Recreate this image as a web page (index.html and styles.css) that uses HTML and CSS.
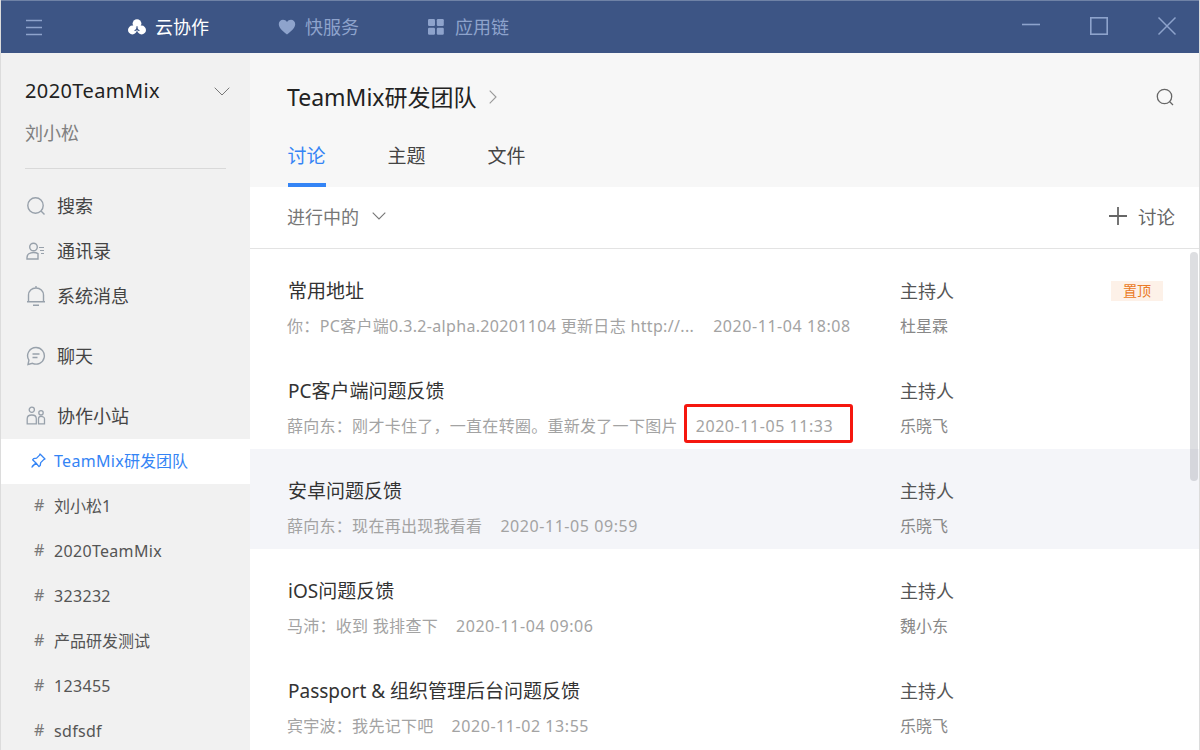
FILE: index.html
```html
<!DOCTYPE html>
<html lang="zh-CN">
<head>
<meta charset="utf-8">
<title>云协作</title>
<link rel="stylesheet" href="styles.css">
</head>
<body>
<div class="app">
  <header class="titlebar">
    <button class="tb-menu" aria-label="菜单"><svg width="18" height="17" viewBox="0 0 18 17"><path d="M1 1.500h16M1 8.500h16M1 15.500h16" stroke="#8ea3cc" stroke-width="1.400" fill="none"/></svg></button>
    <nav class="tb-nav">
      <a class="tb-link active"><svg width="18" height="16" viewBox="0 0 18 16"><circle cx="9" cy="4.600" r="4.400" fill="#fff"/><circle cx="4.400" cy="11" r="4.400" fill="#fff"/><circle cx="13.600" cy="11" r="4.400" fill="#fff"/><path d="M9 7.200v3M9 10.200l-2.400 1.600M9 10.200l2.400 1.600" stroke="#3d5585" stroke-width="1.200" fill="none"/></svg>云协作</a>
      <a class="tb-link"><svg width="18" height="16" viewBox="0 0 18 16"><path d="M9 15.500C3.500 11.500.8 8.600.8 5.100.8 2.500 2.800.7 5 .7c1.700 0 3.100.8 4 2.200C9.900 1.500 11.300.7 13 .7c2.200 0 4.200 1.800 4.200 4.400 0 3.500-2.700 6.400-8.200 10.400z" fill="#8ea3cc"/></svg>快服务</a>
      <a class="tb-link"><svg width="18" height="16" viewBox="0 0 18 16"><rect width="7" height="7" rx="1.200" fill="#8ea3cc"/><rect x="8.800" width="7" height="7" rx="1.200" fill="#8ea3cc"/><rect y="8.800" width="7" height="7" rx="1.200" fill="#8ea3cc"/><rect x="8.800" y="8.800" width="7" height="7" rx="1.200" fill="#8ea3cc"/></svg>应用链</a>
    </nav>
    <div class="tb-win">
      <svg width="20" height="20" viewBox="0 0 20 20"><path d="M1 8.500h18" stroke="#8ea3cc" stroke-width="1.600"/></svg>
      <svg width="20" height="20" viewBox="0 0 20 20"><rect x="1.800" y="1.800" width="16.400" height="16.400" fill="none" stroke="#8ea3cc" stroke-width="1.600"/></svg>
      <svg width="20" height="20" viewBox="0 0 20 20"><path d="M1.500 1.500l17 17M18.500 1.500l-17 17" stroke="#8ea3cc" stroke-width="1.500"/></svg>
    </div>
  </header>

  <div class="body">
    <aside class="sidebar">
      <div class="team">
        <div class="team-name"><span class="lat">2020TeamMix</span><svg width="16" height="9" viewBox="0 0 16 9"><path d="M.7.7L8 8l7.300-7.300" stroke="#777" stroke-width="1" fill="none"/></svg></div>
        <div class="user-name">刘小松</div>
      </div>
      <ul class="menu">
        <li class="menu-item"><svg width="20" height="20" viewBox="0 0 20 20"><circle cx="9.500" cy="9.500" r="7.700" fill="none" stroke="#98a1ab" stroke-width="1.400"/><path d="M15 15l3.500 3.500" stroke="#98a1ab" stroke-width="1.400"/></svg>搜索</li>
        <li class="menu-item m2"><svg width="20" height="20" viewBox="0 0 20 20"><circle cx="7.500" cy="6" r="3.800" fill="none" stroke="#98a1ab" stroke-width="1.400"/><path d="M1 18v-1.500c0-3 2.800-5 6.500-5 1.700 0 3.300.4 4.500 1.200V18z" fill="none" stroke="#98a1ab" stroke-width="1.400"/><path d="M13 6.500h5M14 9.500h4M15 12.500h3" stroke="#98a1ab" stroke-width="1.100"/></svg>通讯录</li>
        <li class="menu-item m3"><svg width="20" height="22" viewBox="0 0 20 22"><path d="M2.500 16.500V10c0-4 3.200-7 7.500-7s7.500 3 7.500 7v6.500M1 16.700h18M10 1v2M7 20.300h6" fill="none" stroke="#98a1ab" stroke-width="1.400"/></svg>系统消息</li>
        <li class="menu-item m4"><svg width="20" height="20" viewBox="0 0 20 20"><path d="M10 1.500a8.300 8.300 0 1 1-3.500 15.800L2 18.500l.9-4.300A8.300 8.300 0 0 1 10 1.500z" fill="none" stroke="#98a1ab" stroke-width="1.400"/><path d="M6.500 8h7M6.500 11.500h5" stroke="#98a1ab" stroke-width="1.300"/></svg>聊天</li>
        <li class="menu-item m5"><svg width="20" height="20" viewBox="0 0 20 20"><circle cx="5.800" cy="3.800" r="2.600" fill="none" stroke="#98a1ab" stroke-width="1.300"/><circle cx="15" cy="6.800" r="2.200" fill="none" stroke="#98a1ab" stroke-width="1.300"/><path d="M1.200 17.800v-5c0-2.300 2-3.800 4.600-3.800s4.500 1.500 4.500 3.800v5zM12.500 17.800v-5c0-1.500 1.100-2.500 2.500-2.500s3.500 1 3.500 2.500v5z" fill="none" stroke="#98a1ab" stroke-width="1.300"/></svg>协作小站</li>
      </ul>
      <ul class="channels">
        <li class="channel active"><svg class="pin" width="15" height="15" viewBox="0 0 15 15"><path d="M9 1l5 5-1.300.6-3 3-.5 3-1.200 1L5 10 1.500 13.500 1 14l.5-.9L5 10 1.600 6.800l1-1.200 3-.5 3-3z" fill="none" stroke="#3484f5" stroke-width="1.300" stroke-linejoin="round"/></svg><span><span class="lat">TeamMix</span>研发团队</span></li>
        <li class="channel"><span class="hash">#</span>刘小松1</li>
        <li class="channel"><span class="hash">#</span><span class="lat">2020TeamMix</span></li>
        <li class="channel"><span class="hash">#</span><span class="lat">323232</span></li>
        <li class="channel"><span class="hash">#</span>产品研发测试</li>
        <li class="channel"><span class="hash">#</span><span class="lat">123455</span></li>
        <li class="channel"><span class="hash">#</span><span class="lat">sdfsdf</span></li>
      </ul>
    </aside>

    <main class="main">
      <section class="head">
        <div class="head-top">
          <h1>TeamMix研发团队</h1>
          <svg class="head-arrow" width="8" height="14" viewBox="0 0 8 14"><path d="M.7.7L7 7 .7 13.300" stroke="#999" stroke-width="1.100" fill="none"/></svg>
          <svg class="head-search" width="18" height="18" viewBox="0 0 18 18"><circle cx="8.500" cy="8.500" r="7.200" fill="none" stroke="#666" stroke-width="1.300"/><path d="M13.500 13.500l3.500 3.500" stroke="#666" stroke-width="1.300"/></svg>
        </div>
        <div class="tabs">
          <span class="tab active">讨论</span>
          <span class="tab">主题</span>
          <span class="tab">文件</span>
        </div>
      </section>
      <div class="filter">
        <span class="filter-l">进行中的<svg width="14" height="8" viewBox="0 0 14 8"><path d="M.7.7L7 7l6.300-6.300" stroke="#777" stroke-width="1.100" fill="none"/></svg></span>
        <span class="filter-r"><svg width="18" height="18" viewBox="0 0 18 18"><path d="M0 9h18M9 0v18" stroke="#666" stroke-width="1.800"/></svg>讨论</span>
      </div>
      <div class="list">
        <article class="row">
          <div class="row-l"><div class="title">常用地址</div><div class="sub"><span class="msg wide">你：PC客户端0.3.2-alpha.20201104 更新日志 http://...</span><span class="time">2020-11-04 18:08</span></div></div>
          <div class="row-r"><div class="host">主持人</div><div class="person">杜星霖</div></div>
          <span class="tag">置顶</span>
        </article>
        <article class="row">
          <div class="row-l"><div class="title">PC客户端问题反馈</div><div class="sub"><span class="msg">薛向东：刚才卡住了，一直在转圈。重新发了一下图片</span><span class="time">2020-11-05 11:33</span></div></div>
          <div class="row-r"><div class="host">主持人</div><div class="person">乐晓飞</div></div>
        </article>
        <article class="row hover">
          <div class="row-l"><div class="title">安卓问题反馈</div><div class="sub"><span class="msg">薛向东：现在再出现我看看</span><span class="time">2020-11-05 09:59</span></div></div>
          <div class="row-r"><div class="host">主持人</div><div class="person">乐晓飞</div></div>
        </article>
        <article class="row">
          <div class="row-l"><div class="title">iOS问题反馈</div><div class="sub"><span class="msg">马沛：收到 我排查下</span><span class="time">2020-11-04 09:06</span></div></div>
          <div class="row-r"><div class="host">主持人</div><div class="person">魏小东</div></div>
        </article>
        <article class="row">
          <div class="row-l"><div class="title">Passport &amp; 组织管理后台问题反馈</div><div class="sub"><span class="msg">宾宇波：我先记下吧</span><span class="time">2020-11-02 13:55</span></div></div>
          <div class="row-r"><div class="host">主持人</div><div class="person">乐晓飞</div></div>
        </article>
        <div class="scrollbar"></div>
      </div>
    </main>
  </div>
  <div class="redbox"></div>
</div>
</body>
</html>
```
FILE: styles.css
```css
* { box-sizing: border-box; }
html, body { margin: 0; padding: 0; }
body {
  width: 1200px; height: 750px; overflow: hidden;
  font-family: "Noto Sans", "Noto Sans CJK SC", sans-serif;
  color: #333; background: #fff;
}
ul { list-style: none; margin: 0; padding: 0; }
.app { position: relative; width: 1200px; height: 750px; overflow: hidden; border-left: 1px solid #dcdcdc; border-right: 1px solid #dcdcdc; }
.lat { letter-spacing: .02em; }

.titlebar {
  height: 53px; background: #3d5585; border: 1px solid #6f82a6; border-bottom: 0;
  display: flex; align-items: center; margin: 0 -1px; padding-left: 24px;
}
.tb-menu { background: none; border: 0; padding: 0; width: 18px; height: 17px; display: block; line-height: 0; }
.tb-nav { display: flex; margin-left: 85px; gap: 69px; }
.tb-link { display: flex; align-items: center; gap: 9px; font-size: 18px; color: #8ea3cc; line-height: 24px; }
.tb-link.active { color: #fff; }
.tb-win { margin-left: auto; margin-bottom: 3px; display: flex; gap: 48px; padding-right: 22px; }
.tb-win svg { display: block; }

.body { display: flex; height: 697px; }
.sidebar { width: 249px; flex: none; background: #f1f1f1; }
.team { margin: 0 24px; padding-top: 24px; height: 116px; border-bottom: 1px solid #d9d9d9; }
.team-name { display: flex; align-items: center; justify-content: space-between; font-size: 20px; line-height: 28px; color: #222; margin-right: -4px; }
.user-name { margin-top: 16px; font-size: 18px; line-height: 24px; color: #808080; }
.menu { padding-left: 25px; padding-top: 25px; }
.menu-item { display: flex; align-items: center; gap: 11px; font-size: 18px; line-height: 24px; height: 24px; color: #444; }
.menu-item svg { flex: none; }
.m2 { margin-top: 21px; }
.m3 { margin-top: 21px; }
.m4 { margin-top: 36px; }
.m5 { margin-top: 36px; }
.channels { margin-top: 11px; }
.channel { display: flex; align-items: center; height: 45px; padding: 0 0 3px 33px; font-size: 16px; color: #555; }
.channel.active { background: #fff; color: #3484f5; padding-left: 30px; }
.channel > .lat { margin-top: 2px; }
.pin { margin-right: 8px; }
.hash { width: 20px; color: #777; }

.main { flex: 1; min-width: 0; display: flex; flex-direction: column; }
.head { height: 134px; background: #f7f7f7; padding-left: 37px; }
.head-top { display: flex; align-items: center; height: 30px; margin-top: 29px; padding-right: 25px; }
.head-top h1 { margin: 0; font-size: 23px; font-weight: 400; color: #222; line-height: 30px; }
.head-arrow { margin-left: 12px; }
.head-search { margin-left: auto; }
.tabs { display: flex; gap: 62px; margin-top: 21px; padding-left: .500px; }
.tab { font-size: 19px; line-height: 46px; height: 54px; color: #444; }
.tab.active { color: #3484f5; border-bottom: 4px solid #3484f5; }

.filter { height: 62px; border-bottom: 1px solid #e3e3e3; display: flex; align-items: center; justify-content: space-between; padding: 0 24px 4px 37px; font-size: 18px; color: #777; }
.filter-l { display: flex; align-items: center; gap: 13px; }
.filter-r { display: flex; align-items: center; gap: 11px; color: #666; font-size: 18.500px; }
.filter svg { display: block; }

.list { position: relative; flex: 1; overflow: hidden; }
.row { position: relative; height: 100px; display: flex; padding-left: 37px; }
.row.hover { background: #f4f5f9; }
.row-l { width: 613px; }
.title { margin-top: 27px; padding-left: 1px; font-size: 19px; line-height: 30px; color: #333; }
.sub { display: flex; margin-top: 8px; font-size: 16px; line-height: 24px; color: #a3a3a3; white-space: nowrap; }
.msg { margin-right: 18px; letter-spacing: .28px; }
.msg.wide { margin-right: 19px; letter-spacing: .33px; }
.time { letter-spacing: .56px; }
.row-r { width: 120px; }
.host { margin-top: 27px; font-size: 18px; line-height: 30px; color: #555; }
.person { margin-top: 8px; font-size: 16px; line-height: 24px; color: #888; }
.tag { position: absolute; left: 861px; top: 32px; width: 52px; height: 20px; background: #fdf1e8; color: #ea7a25; font-size: 14px; line-height: 20px; text-align: center; }
.scrollbar { position: absolute; right: 1px; top: 3px; width: 8px; height: 229px; border-radius: 4px; background: rgba(120,125,135,.25); }
.redbox { position: absolute; left: 683px; top: 404px; width: 169px; height: 39px; border: 3px solid #f5170f; border-radius: 3px; }
```
